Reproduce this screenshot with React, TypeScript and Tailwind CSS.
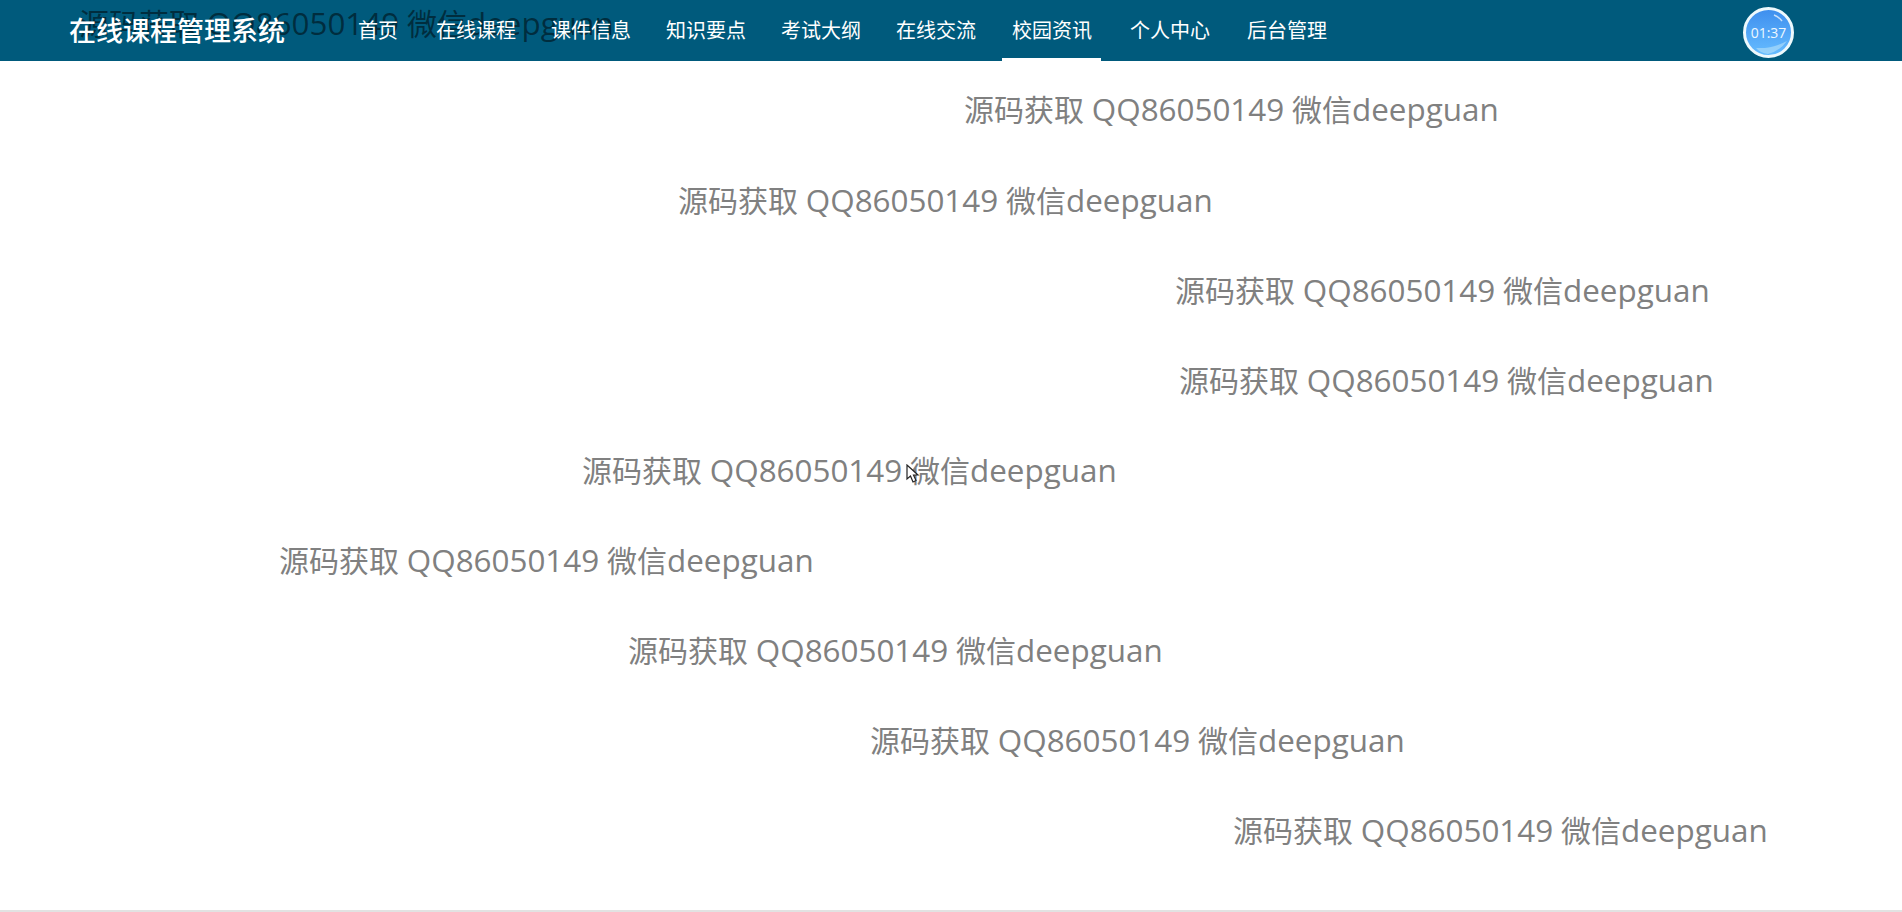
const items = ["首页","在线课程","课件信息","知识要点","考试大纲","在线交流","校园资讯","个人中心","后台管理"];
const gaps = ["mr-[38px]","mr-[35px]","mr-[35px]","mr-[35px]","mr-[35px]","mr-[36px]","mr-[38px]","mr-[37px]","mr-[36px]"];
const marks = [
  "left-[964px] top-[87px]",
  "left-[678px] top-[178px]",
  "left-[1175px] top-[268px]",
  "left-[1179px] top-[358px]",
  "left-[582px] top-[448px]",
  "left-[279px] top-[538px]",
  "left-[628px] top-[628px]",
  "left-[870px] top-[718px]",
  "left-[1233px] top-[808px]",
];
const fontCls = "font-['Open_Sans','Noto_Sans_CJK_SC',sans-serif]";

function Mark() {
  return (
    <>
      源码获取 <span className="text-[31.4px]">QQ86050149</span> 微信<span className="text-[31.4px]">deepguan</span>
    </>
  );
}

function Watermark({ cls }: { cls: string }) {
  return (
    <span className={`absolute ${cls} text-[30px] leading-[44px] whitespace-nowrap text-[#808080]`}>
      <Mark />
    </span>
  );
}

export default function App() {
  return (
    <div className={`relative h-[912px] w-full overflow-hidden bg-white ${fontCls}`}>
      <header className="relative flex h-[61px] items-center bg-[#005a7c]">
        <span className="absolute left-[79px] top-[1px] text-[30px] leading-[44px] whitespace-nowrap text-black/50">
          <Mark />
        </span>
        <div className="relative ml-[69px] w-[289px] text-[27px] font-medium leading-[61px] text-white pb-[1px]">在线课程管理系统</div>
        <nav className="relative flex h-full items-center">
          {items.map((t, i) => (
            <a key={t} className={`relative flex h-full items-center text-[20px] text-white ${gaps[i]}`}>
              {t}
              {i === 6 && <span className="absolute bottom-0 left-[-10px] right-[-9px] h-[3px] bg-white" />}
            </a>
          ))}
        </nav>
        <div className="absolute left-[1743px] top-[7px] flex h-[51px] w-[51px] items-center justify-center overflow-hidden rounded-full border-[3px] border-[#eef9fd] bg-gradient-to-b from-[#3f8fee] to-[#66bcff]">
          <svg className="absolute inset-0 h-full w-full" viewBox="0 0 45 45" fill="none">
            <path d="M10 38 Q26 39 41 31 Q34 41 22 44 Q14 43 10 38Z" fill="#bfe6f7" fillOpacity="0.55" />
            <path d="M28 5 Q33 7 36 11" stroke="#ffffff" strokeOpacity="0.7" strokeWidth="1.5" />
          </svg>
          <span className="relative text-[14px] font-normal text-[#eef8ff]">01:37</span>
        </div>
      </header>
      {marks.map((m) => (
        <Watermark key={m} cls={m} />
      ))}
      <svg className="absolute left-[906px] top-[464px] z-10" width="14" height="20" viewBox="0 0 14 20">
        <path d="M1 1 L1 15 L4.5 12 L7 18 L10 16.5 L7.5 11 L12 11 Z" fill="#ffffff" stroke="#222222" strokeWidth="1.2" />
      </svg>
      <div className="absolute bottom-0 left-0 right-0 h-[2px] bg-[#e2e2e2]" />
    </div>
  );
}
